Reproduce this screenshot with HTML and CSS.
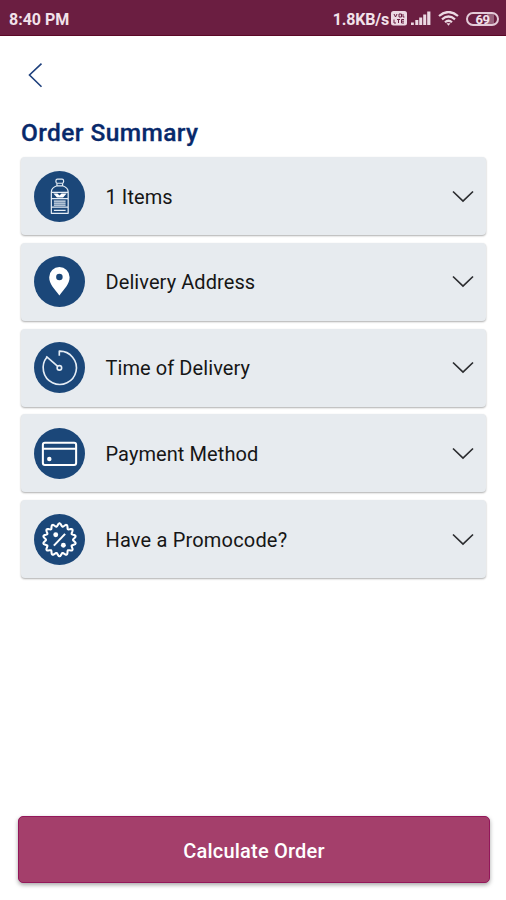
FILE: index.html
```html
<!DOCTYPE html>
<html lang="en">
<head>
<meta charset="utf-8">
<title>Order Summary</title>
<link rel="stylesheet" href="styles.css">
</head>
<body>
<header class="status">
  <span class="time">8:40 PM</span>
  <div class="indicators">
    <span class="speed">1.8KB/s</span>
    <svg class="volte" width="16" height="15" viewBox="0 0 16 15"><rect width="16" height="14.5" rx="2.5" fill="#ecd9e3"/><path d="M3 3l1.500 3L6 3M8 3h2.500v3H8zM12 3v3h1.500M3 8.500v3.500h2M6 8.500h3M7.500 8.500V12M13 8.500h-2.500V12H13M10.500 10.200H13" fill="none" stroke="#6b1e41"/></svg>
    <svg class="signal" width="20" height="15" viewBox="0 0 20 15"><g fill="#ecd9e3"><rect y="11.500" width="2.800" height="2.500"/><rect x="4.300" y="9" width="3" height="5"/><rect x="8.200" y="6.500" width="3" height="7.500"/><rect x="12.200" y="3.500" width="3" height="10.500"/><rect x="16.200" y="0.500" width="3.200" height="13.500"/></g></svg>
    <svg class="wifi" width="21" height="15" viewBox="0 0 21 15"><g fill="none" stroke="#ecd9e3" stroke-width="2.200"><path d="M1 5Q10.500-3 20 5M4 8.300Q10.500 2.700 17 8.300M7 11.300Q10.500 8.200 14 11.300"/></g><path d="M8.500 12.200h4l-2 2.500z" fill="#ecd9e3"/></svg>
    <span class="battery">69</span>
  </div>
</header>
<main>
  <svg class="back" width="16" height="26" viewBox="0 0 16 26"><path d="M14.500 1.700L2.500 13l12 11.700" fill="none" stroke="#1d3f7c" stroke-width="1.600"/></svg>
  <h1>Order Summary</h1>
  <section class="list">
    <div class="card">
      <svg class="icon" viewBox="0 0 50 50"><circle cx="25" cy="25" r="25"/><g class="line thin"><rect x="21.500" y="8" width="7.500" height="4" rx="1.500"/><path d="M22.500 12v2.500c-3 1-5.500 2.500-5.500 6V41.500h16.500V20.500c0-3.500-2.500-5-5.500-6V12M22.500 14.500H28M17 21h16.500M17 27h16.500M19.500 29.500h11.500M19.500 31.500h11.500M19.500 33.500h11.500M17 35.500h16.500M19.500 38.500h11.500"/></g><path class="solid" d="M19 22h4l2 2 2-2h5l-3.500 4h-6z"/></svg>
      <span class="label">1 Items</span>
      <svg class="chevron" viewBox="0 0 22 12"><path d="M1 1l10 9.500L21 1"/></svg>
    </div>
    <div class="card">
      <svg class="icon" viewBox="0 0 50 50"><circle cx="25" cy="25" r="25"/><path class="solid" fill-rule="evenodd" d="M24.900 38.800C20 32 14.900 27.500 14.900 20.800a10 10 0 0 1 20 0c0 6.700-5.100 11.200-10 18zM24.900 17.400a3.200 3.200 0 1 0 0 6.400a3.200 3.200 0 1 0 0-6.400z"/></svg>
      <span class="label">Delivery Address</span>
      <svg class="chevron" viewBox="0 0 22 12"><path d="M1 1l10 9.500L21 1"/></svg>
    </div>
    <div class="card">
      <svg class="icon" viewBox="0 0 50 50"><circle cx="25" cy="25" r="25"/><g class="line timer"><path d="M24.800 13.500V9A16.300 16.300 0 1 1 12.800 14.800"/><path d="M12 14l11.300 9.800"/><circle cx="24.900" cy="25.400" r="2.200"/></g></svg>
      <span class="label">Time of Delivery</span>
      <svg class="chevron" viewBox="0 0 22 12"><path d="M1 1l10 9.500L21 1"/></svg>
    </div>
    <div class="card">
      <svg class="icon" viewBox="0 0 50 50"><circle cx="25" cy="25" r="25"/><g class="line bold"><rect x="8.700" y="14.500" width="32.600" height="21.700" rx="2"/><path d="M9 20.300h32"/></g><circle class="solid" cx="15" cy="30.500" r="2.200"/></svg>
      <span class="label">Payment Method</span>
      <svg class="chevron" viewBox="0 0 22 12"><path d="M1 1l10 9.500L21 1"/></svg>
    </div>
    <div class="card">
      <svg class="icon" viewBox="0 0 50 50"><circle cx="25" cy="25" r="25"/><g class="line bold"><path id="seal" d=""/><path d="M19.500 31L30.500 19.500"/></g><circle class="solid" cx="21.300" cy="20.300" r="2.400"/><circle class="solid" cx="28.800" cy="30.700" r="2.400"/></svg>
      <span class="label promo">Have a Promocode?</span>
      <svg class="chevron" viewBox="0 0 22 12"><path d="M1 1l10 9.500L21 1"/></svg>
    </div>
  </section>
  <button class="submit">Calculate Order</button>
</main>
<script src="seal.js"></script>
</body>
</html>
```
FILE: styles.css
```css
* { box-sizing: border-box; }
body {
  margin: 0;
  height: 900px;
  display: flex;
  flex-direction: column;
  background: #fff;
  font-family: Roboto, "Liberation Sans", sans-serif;
}
.status {
  height: 36px;
  padding: 2px 7px 0 9px;
  display: flex;
  align-items: center;
  justify-content: space-between;
  background: #6b1e41;
  border-bottom: 1px solid #5c0826;
  color: #f2e2ea;
  font-size: 16px;
  font-weight: 700;
}
.time, .speed { padding-top: 2px; }
.speed { letter-spacing: -0.2px; }
.indicators { display: flex; align-items: center; }
.volte { margin-left: 2px; }
.signal { margin-left: 4px; }
.wifi { margin-left: 7px; }
.battery {
  width: 33px;
  height: 14px;
  margin-left: 7px;
  border: 2px solid #e3cbd8;
  border-radius: 7px;
  background: linear-gradient(90deg, transparent 65%, #97627c 65% 88%, transparent 88%);
  font-size: 13px;
  line-height: 11px;
  text-align: center;
  letter-spacing: -0.5px;
}
main {
  flex: 1;
  display: flex;
  flex-direction: column;
  padding: 26px 16px 17px 18px;
}
.back { margin-left: 9px; flex: none; }
h1 {
  margin: 29px 0 0 3px;
  height: 40px;
  line-height: 32px;
  font-size: 24.5px;
  font-weight: 500;
  letter-spacing: 0.4px;
  color: #08296b;
  -webkit-text-stroke: 0.3px #08296b;
}
.list {
  display: flex;
  flex-direction: column;
  gap: 7.75px;
  width: 465px;
  margin-left: 3px;
}
.card {
  height: 78px;
  padding: 0 12px 0 13px;
  display: flex;
  align-items: center;
  background: #e7ebef;
  border-radius: 4px;
  box-shadow: 0 1px 2px rgba(0, 0, 0, 0.32);
}
.icon { width: 51px; height: 51px; fill: #1b4779; }
.line { fill: none; stroke: #fff; stroke-linejoin: round; }
.thin { stroke: #e5edf5; stroke-width: 1.2; }
.timer { stroke: #e5edf5; stroke-width: 1.6; }
.bold { stroke-width: 2; }
.solid { fill: #fff; }
.label {
  flex: 1;
  margin-left: 20.5px;
  padding-top: 1px;
  font-size: 20px;
  letter-spacing: 0.08px;
  color: #161616;
}
.promo { letter-spacing: 0.18px; }
.chevron { width: 22px; height: 13px; fill: none; stroke: #2b2c2f; stroke-width: 1.7; }
.submit {
  margin-top: auto;
  height: 67px;
  padding-top: 3px;
  border: 1px solid #93175a;
  border-radius: 5px;
  background: #a43f6b;
  box-shadow: 0 2px 4px rgba(0, 0, 0, 0.35);
  color: #fff;
  font: 500 20px Roboto, "Liberation Sans", sans-serif;
  letter-spacing: 0.2px;
}
```
FILE: seal.js
```js
// Scalloped seal outline with fourteen teeth around the icon centre.
const points = [];
for (let i = 0; i < 140; i++) {
  const angle = (i / 140) * Math.PI * 2;
  const radius = 14.7 + 1.5 * Math.cos(14 * angle);
  points.push((25 + radius * Math.sin(angle)).toFixed(2) + " " + (25.3 - radius * Math.cos(angle)).toFixed(2));
}
document.getElementById("seal").setAttribute("d", "M" + points.join("L") + "Z");
```
